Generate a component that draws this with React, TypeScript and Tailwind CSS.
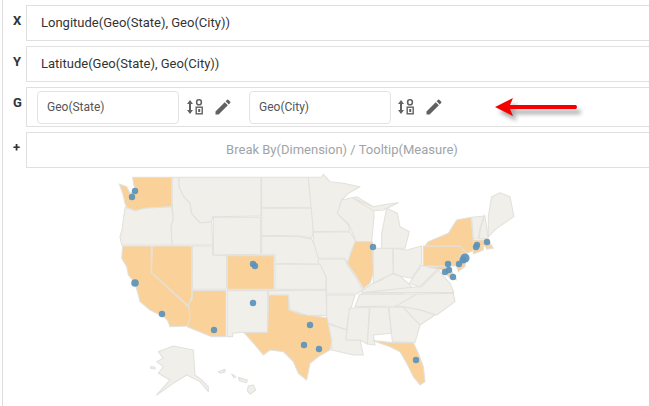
const O = "#fad199";
const L = "#f1efe9";

// Coordinates below are written at 3x scale inside translated groups.
const west: [string, string][] = [
  [O, "M68,22 L185,22 L185,110 L130,113 L105,115 L75,122 L50,112 L45,100 L38,70 L28,42 L50,50 L60,70 L78,62 L72,48 Z"],
  [L, "M45,112 L75,122 L105,115 L185,110 L190,150 L183,165 L187,225 L35,225 L30,200 L36,180 L40,150 Z"],
  [L, "M187,22 L207,22 L207,50 L222,80 L240,100 L245,130 L270,158 L305,155 L308,225 L187,225 L183,165 L190,150 L187,110 Z"],
  [L, "M207,22 L453,22 L453,138 L308,140 L305,155 L270,158 L245,130 L240,100 L222,80 L207,50 Z"],
  [L, "M310,142 L452,142 L452,253 L310,255 Z"],
  [L, "M455,22 L595,22 L600,70 L608,112 L455,113 Z"],
  [L, "M455,115 L608,115 L610,185 L605,205 L570,198 L455,196 Z"],
  [L, "M455,198 L570,200 L605,207 L620,240 L630,283 L495,280 L495,253 L455,253 Z"],
  [O, "M352,257 L492,257 L492,358 L352,358 Z"],
  [L, "M247,228 L308,228 L308,255 L350,257 L350,358 L247,358 Z"],
  [O, "M127,228 L245,228 L245,380 L235,408 L125,308 Z"],
  [O, "M38,228 L124,228 L124,308 L235,410 L245,440 L232,468 L180,470 L172,450 L160,440 L120,420 L90,395 L85,375 L75,340 L55,315 L50,290 L35,265 Z"],
  [O, "M247,362 L348,362 L348,500 L305,500 L232,470 L240,440 L235,405 L247,385 Z"],
  [L, "M352,362 L473,362 L473,487 L400,487 L368,490 L368,500 L352,500 Z"],
  [O, "M476,375 L535,375 L537,420 L570,432 L630,440 L655,445 L665,515 L660,540 L625,560 L600,580 L590,630 L565,610 L550,575 L520,545 L480,540 L460,555 L435,525 L402,488 L473,487 Z"],
  [L, "M145,545 L190,528 L250,540 L255,615 L275,630 L295,650 L295,665 L270,635 L230,615 L190,640 L140,675 L180,630 L145,610 L160,590 L140,575 L160,565 Z"],
  [L, "M122,590 L135,592 L135,597 L122,595 Z"],
  [L, "M325,605 L345,598 L345,606 L330,610 Z"],
  [L, "M365,612 L378,620 L372,624 Z"],
  [L, "M385,622 L412,630 L410,638 L388,632 Z"],
  [L, "M415,648 L430,645 L437,660 L420,673 L412,662 Z"],
];

const east: [string, string][] = [
  [L, "M-5,22 L35,22 L40,13 L60,35 L100,40 L150,50 L115,70 L95,90 L82,130 L115,165 L120,183 L10,185 L5,130 Z"],
  [L, "M10,187 L120,185 L138,215 L125,240 L112,280 L105,265 L25,265 L10,215 Z"],
  [L, "M82,130 L95,90 L140,80 L190,110 L192,140 L185,215 L138,215 L118,165 Z"],
  [L, "M25,267 L105,267 L112,285 L140,325 L158,360 L140,372 L50,372 L48,320 L25,280 Z"],
  [L, "M-105,283 L30,283 L48,320 L48,358 L-105,358 Z"],
  [L, "M-125,362 L48,360 L50,437 L-10,435 L-60,420 L-65,375 L-125,375 Z"],
  [L, "M50,375 L135,375 L115,440 L110,480 L55,460 L50,437 Z"],
  [L, "M55,462 L110,480 L108,510 L150,510 L160,555 L130,555 L65,540 L65,510 Z"],
  [L, "M118,415 L178,412 L172,522 L150,510 L108,510 L112,470 Z"],
  [L, "M180,412 L235,412 L245,490 L190,495 L195,525 L172,522 Z"],
  [L, "M237,412 L278,410 L330,465 L315,518 L247,515 Z"],
  [O, "M190,512 L247,518 L310,518 L325,550 L340,590 L345,635 L330,645 L310,620 L290,580 L270,545 L240,530 Z"],
  [L, "M135,410 L150,372 L320,372 L280,408 Z"],
  [L, "M320,372 L430,370 L435,395 L380,435 L330,420 L280,410 L255,410 Z"],
  [L, "M278,410 L330,420 L375,435 L330,465 Z"],
  [L, "M158,360 L190,340 L215,330 L240,310 L270,318 L305,350 L275,372 L155,372 Z"],
  [L, "M190,235 L248,235 L250,310 L190,340 Z"],
  [L, "M250,235 L290,240 L335,228 L335,280 L305,325 L270,318 L250,310 Z"],
  [L, "M230,115 L262,130 L270,170 L298,185 L285,235 L215,235 L215,190 Z"],
  [L, "M130,85 L190,110 L215,105 L265,98 L220,120 L190,122 Z"],
  [L, "M298,340 L335,285 L355,290 L385,295 L350,330 L330,350 Z"],
  [L, "M160,368 L305,352 L335,350 L385,300 L420,340 L432,368 Z"],
  [O, "M135,215 L187,215 L190,310 L180,340 L160,355 L140,320 L112,280 Z"],
  [O, "M340,228 L450,228 L470,250 L450,288 L340,288 Z"],
  [O, "M355,215 L415,190 L440,150 L483,142 L490,210 L495,240 L470,250 L450,228 L345,228 Z"],
  [O, "M455,250 L470,255 L465,290 L445,305 L440,290 Z"],
  [O, "M355,292 L415,288 L435,320 L440,330 L420,325 L400,300 Z"],
  [L, "M485,142 L522,138 L510,175 L505,205 L490,205 Z"],
  [L, "M524,135 L530,170 L535,205 L507,207 L512,175 Z"],
  [L, "M535,140 L545,80 L570,68 L600,80 L612,140 L560,175 L535,200 Z"],
  [O, "M490,210 L535,210 L550,235 L530,238 L525,228 L490,225 Z"],
  [O, "M490,225 L520,228 L520,240 L490,252 Z"],
];

const dots: [number, number, number][] = [
  [135, 191, 3.2], [132, 197, 3.2], [253, 264, 3.2], [255, 266, 3.2], [135, 283, 3.8], [162, 314, 3.2],
  [253, 303, 3.2], [214, 330, 3.2], [310, 325, 3.2], [304, 345, 3.2], [319, 349, 3.2], [373, 247, 3.2],
  [416, 360, 3.2], [448, 264, 3.2], [449, 270, 3.2], [445, 272, 3.2], [453, 277, 3.2], [459, 264, 3.2],
  [465, 258, 4.6], [463, 260, 3.6], [476, 247, 3.2], [477, 245, 3.2], [487, 242, 3.2],
];

function MapStates({ items, x }: { items: [string, string][]; x: number }) {
  return (
    <g transform={`translate(${x} 170) scale(0.3333)`}>
      {items.map(([fill, d], i) => (
        <path key={i} d={d} fill={fill} stroke="#e2e1dd" strokeWidth={3.2} strokeLinejoin="round" />
      ))}
    </g>
  );
}

function SortIcon() {
  return (
    <svg width="16" height="18" viewBox="0 0 16 18" className="shrink-0">
      <path d="M3 2 L6 6 H4 V12 H6 L3 16 L0 12 H2 V6 H0 Z" fill="#616161" />
      <rect x="9.7" y="1.7" width="4.6" height="5" rx="2" fill="none" stroke="#616161" strokeWidth="1.6" />
      <rect x="9.2" y="9.2" width="6" height="6.6" fill="none" stroke="#616161" strokeWidth="1.4" />
      <rect x="11.2" y="11" width="2" height="3" fill="#616161" />
    </svg>
  );
}

function PencilIcon() {
  return (
    <svg width="20" height="20" viewBox="0 0 24 24" className="shrink-0">
      <path
        fill="#616161"
        d="M3 17.25V21h3.75L17.81 9.94l-3.75-3.75L3 17.25zM20.71 7.04a1 1 0 0 0 0-1.41l-2.34-2.34a1 1 0 0 0-1.41 0l-1.83 1.83 3.75 3.75 1.83-1.83z"
      />
    </svg>
  );
}

function FieldChip({ label }: { label: string }) {
  return (
    <div className="flex h-[33px] w-[142px] shrink-0 items-center rounded-[4px] border border-[#e3e3e3] pl-[9px] text-[12px] text-[#555555]">
      {label}
    </div>
  );
}

function Row({ letter, children, className }: { letter: string; children: React.ReactNode; className: string }) {
  return (
    <div className="flex">
      <div className="w-[23px] shrink-0 pt-[8px] pl-[10px] text-[13px] leading-[15px] font-bold text-[#333333]">{letter}</div>
      <div className={`flex flex-1 items-center border border-r-0 border-[#e0e0e0] ${className}`}>{children}</div>
    </div>
  );
}

export default function App() {
  return (
    <div className="h-[406px] w-[649px] overflow-hidden bg-white font-['Roboto',sans-serif]">
      <div className="ml-[2px] h-full border-l border-[#dddddd] pt-[5px]">
        <div className="flex flex-col gap-[5px]">
          <Row letter="X" className="h-[36px] pl-[14px] text-[13px] text-[#333333]">
            Longitude(Geo(State), Geo(City))
          </Row>
          <Row letter="Y" className="h-[36px] pl-[14px] text-[13px] text-[#333333]">
            Latitude(Geo(State), Geo(City))
          </Row>
          <Row letter="G" className="h-[40px] pl-[10px]">
            <FieldChip label="Geo(State)" />
            <div className="ml-[8px]"><SortIcon /></div>
            <div className="ml-[10px]"><PencilIcon /></div>
            <div className="ml-[16px]"><FieldChip label="Geo(City)" /></div>
            <div className="ml-[7px]"><SortIcon /></div>
            <div className="ml-[10px]"><PencilIcon /></div>
            <svg width="92" height="34" viewBox="0 0 92 34" className="ml-[50px] shrink-0 drop-shadow-[4px_5px_2px_rgba(0,0,0,0.35)]">
              <path d="M1 17 L19 8 L16 15 L82 15 Q84 17 82 19 L16 19 L19 26 Z" fill="#f50000" />
            </svg>
          </Row>
          <Row letter="+" className="h-[36px] justify-center pb-[1px] pl-[8px] text-[13px] text-[#a0a4a8]">
            Break By(Dimension) / Tooltip(Measure)
          </Row>
        </div>
        <svg width="420" height="236" viewBox="110 170 420 236" className="mt-[2px] ml-[107px] block blur-[0.3px]">
          <MapStates items={west} x={110} />
          <MapStates items={east} x={310} />
          {dots.map(([cx, cy, r], i) => (
            <circle key={i} cx={cx} cy={cy} r={r} fill="#5b93ba" fillOpacity={0.92} />
          ))}
        </svg>
      </div>
    </div>
  );
}
